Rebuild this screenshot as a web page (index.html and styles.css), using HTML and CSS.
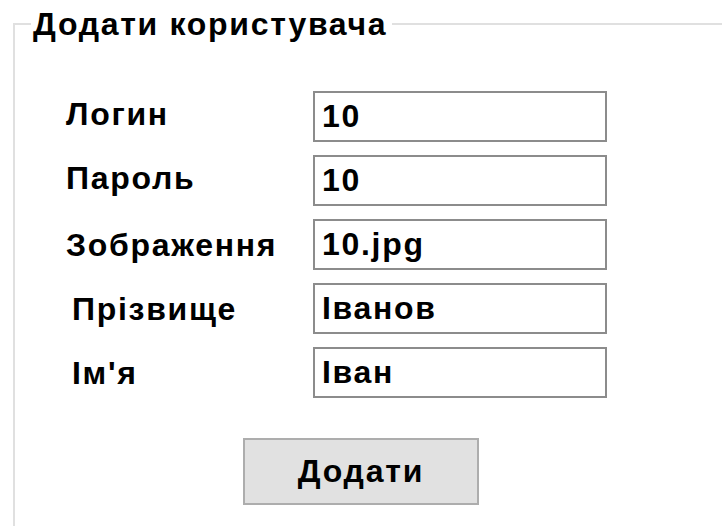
FILE: index.html
```html
<!DOCTYPE html>
<html lang="uk">
<head>
<meta charset="utf-8">
<title>Додати користувача</title>
<link rel="stylesheet" href="styles.css">
</head>
<body>
  <fieldset class="group">
    <legend class="group-title">Додати користувача</legend>
    <div class="form">
      <label class="lbl lbl-up" for="login">Логин</label>
      <input class="field" id="login" type="text" value="10">

      <label class="lbl lbl-up" for="pass">Пароль</label>
      <input class="field" id="pass" type="text" value="10">

      <label class="lbl" for="img">Зображення</label>
      <input class="field" id="img" type="text" value="10.jpg">

      <label class="lbl lbl-in" for="surname">Прізвище</label>
      <input class="field" id="surname" type="text" value="Іванов">

      <label class="lbl lbl-in" for="name">Ім'я</label>
      <input class="field" id="name" type="text" value="Іван">
    </div>
    <div class="actions">
      <button class="btn" type="button">Додати</button>
    </div>
  </fieldset>
</body>
</html>
```

FILE: styles.css
```css
html, body {
  margin: 0;
  padding: 0;
  background: #ffffff;
  overflow: hidden;
}

body {
  width: 722px;
  height: 526px;
  font-family: "Liberation Sans", Arial, sans-serif;
  font-weight: bold;
  color: #000000;
  letter-spacing: 1.7px;
}

/* group box: only the top and left edges fall inside the window */
.group {
  margin: 6px 0 0 13px;
  width: 709px;
  height: 520px;
  border: 2px solid #e0e0e0;
  border-right: 0;
  border-bottom: 0;
  padding: 49px 0 0 0;
  box-sizing: border-box;
}

.group-title {
  margin-left: 16px;
  padding: 0 5px 0 2px;
  font-size: 32px;
  line-height: 36px;
}

.form {
  display: grid;
  grid-template-columns: 247px 294px;
  grid-auto-rows: 51px;
  row-gap: 13px;
  margin-left: 51px;
}

.lbl {
  font-size: 32px;
  line-height: 34px;
  padding-top: 9px;
}

.lbl-up {
  padding-top: 6px;
}

.lbl-in {
  padding-left: 6px;
}

.field {
  box-sizing: border-box;
  width: 294px;
  height: 51px;
  margin: 0;
  border: 2px solid #8c8c8c;
  padding: 0 0 0 7px;
  font-family: inherit;
  font-weight: bold;
  font-size: 32px;
  letter-spacing: 1.7px;
  color: #000000;
  background: #ffffff;
  outline: none;
}

.actions {
  padding: 40px 0 0 228px;
}

.btn {
  box-sizing: border-box;
  width: 236px;
  height: 67px;
  margin: 0;
  border: 2px solid #adadad;
  background: #e1e1e1;
  font-family: inherit;
  font-weight: bold;
  font-size: 32px;
  letter-spacing: 1.8px;
  color: #000000;
  padding: 0;
}
```
